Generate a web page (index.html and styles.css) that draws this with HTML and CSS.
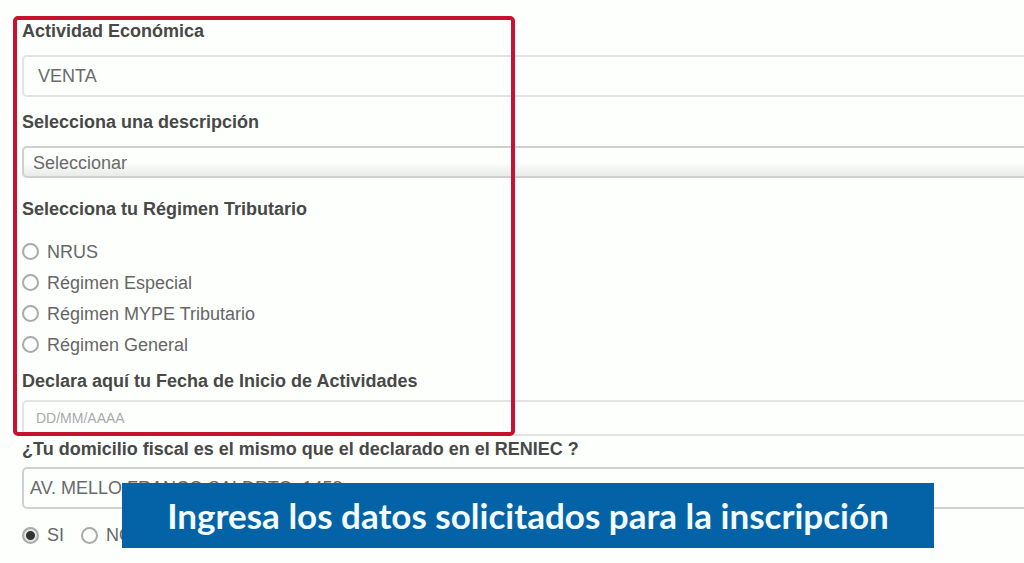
FILE: index.html
```html
<!DOCTYPE html>
<html lang="es">
<head>
<meta charset="utf-8">
<title>Inscripción</title>
<link rel="stylesheet" href="styles.css">
</head>
<body>
<main class="screen">
  <form class="form">
    <div class="group group-activity">
      <label class="label" for="actividad">Actividad Económica</label>
      <input class="field field-activity" id="actividad" type="text" value="VENTA">
    </div>
    <div class="group group-description">
      <label class="label" for="descripcion">Selecciona una descripción</label>
      <select class="field field-select" id="descripcion"><option>Seleccionar</option></select>
    </div>
    <fieldset class="group group-regime">
      <legend class="label">Selecciona tu Régimen Tributario</legend>
      <label class="option"><input class="radio" type="radio" name="regimen">NRUS</label>
      <label class="option"><input class="radio" type="radio" name="regimen">Régimen Especial</label>
      <label class="option"><input class="radio" type="radio" name="regimen">Régimen MYPE Tributario</label>
      <label class="option"><input class="radio" type="radio" name="regimen">Régimen General</label>
    </fieldset>
    <div class="group group-date">
      <label class="label" for="fecha">Declara aquí tu Fecha de Inicio de Actividades</label>
      <input class="field field-date" id="fecha" type="text" placeholder="DD/MM/AAAA">
    </div>
    <div class="group group-address">
      <label class="label" for="domicilio">¿Tu domicilio fiscal es el mismo que el declarado en el RENIEC ?</label>
      <input class="field field-address" id="domicilio" type="text" value="AV. MELLO FRANCO SALDRTO  1458">
    </div>
    <div class="answers">
      <label class="option"><input class="radio" type="radio" name="mismo" checked>SI</label>
      <label class="option"><input class="radio" type="radio" name="mismo">NO</label>
    </div>
  </form>
  <div class="highlight"></div>
  <p class="caption">Ingresa los datos solicitados para la inscripción</p>
</main>
</body>
</html>
```
FILE: styles.css
```css
* { box-sizing: border-box; }

body {
  margin: 0;
  background: #fdfffd;
  color: #666;
  font: 18px/20px "Liberation Sans", Arial, sans-serif;
}

.screen {
  position: relative;
  min-height: 100vh;
  overflow: hidden;
}

.form {
  display: flex;
  flex-direction: column;
  padding: 21px 0 12px 22px;
  margin-right: -16px;
}

.group {
  display: flex;
  flex-direction: column;
  min-width: 0;
  margin: 0;
  padding: 0;
  border: 0;
}

.label {
  padding: 0;
  color: #484848;
  font-weight: bold;
}

.field {
  width: 100%;
  border: 2px solid #e2e4e2;
  border-radius: 5px;
  background: #fdfffd;
  color: #6a6a6a;
  font: inherit;
  outline: 0;
}

.group-activity { gap: 14px; }
.field-activity { height: 42px; padding: 0 14px; }

.group-description { gap: 14px; margin-top: 15px; }
.field-select {
  appearance: none;
  height: 32px;
  padding: 1px 9px 0;
  border-color: #cfd1cf;
  background: linear-gradient(#fdfffd 50%, #e9ebe9);
}

.group-regime { margin-top: 21px; }
.group-regime .label { margin-bottom: 17px; }
.group-regime .option { height: 31px; }

.option {
  display: flex;
  align-items: center;
  gap: 8px;
}

.radio {
  appearance: none;
  flex: none;
  width: 17px;
  height: 17px;
  margin: 0;
  border: 2px solid #aaa;
  border-radius: 50%;
  background: #fdfffd;
}

.radio:checked {
  background: radial-gradient(circle, #333 4px, #e4e4e4 5px);
}

.group-date { gap: 9px; margin-top: 11px; }
.field-date { height: 36px; padding: 0 12px; font-size: 14px; }
.field-date::placeholder { color: #aaa; opacity: 1; }

.group-address { gap: 8px; margin-top: 3px; }
.field-address { height: 42px; padding: 0 6px; border-color: #d0d2d0; }

.answers {
  display: flex;
  gap: 17px;
  margin-top: 16px;
}

.highlight {
  position: absolute;
  top: 16px;
  left: 13px;
  width: 502px;
  height: 420px;
  border: 4px solid #c4122f;
  border-radius: 5px;
  pointer-events: none;
}

.caption {
  position: absolute;
  right: 90px;
  bottom: 15px;
  left: 122px;
  margin: 0;
  padding: 14px 0 15px;
  background: #0463a7;
  color: #f2fcff;
  font: bold 35px/36px Lato, sans-serif;
  text-align: center;
  white-space: nowrap;
}
```
